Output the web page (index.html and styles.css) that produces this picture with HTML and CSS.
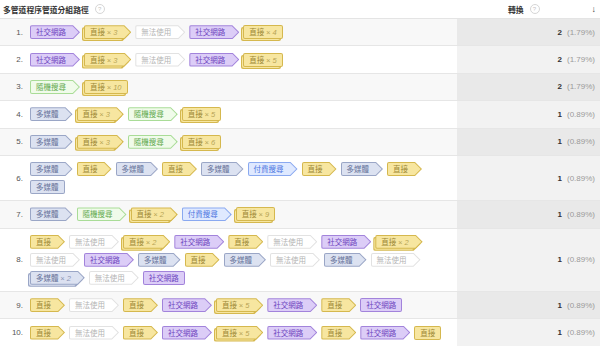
FILE: index.html
```html
<!DOCTYPE html>
<html lang="zh-Hant">
<head>
<meta charset="utf-8">
<title>多管道程序管道分組路徑</title>
<link rel="stylesheet" href="styles.css">
</head>
<body>
<div class="tbl">
  <div class="hdr">
    <div class="hdr-path">多管道程序管道分組路徑<span class="help">?</span></div>
    <div class="hdr-conv">轉換<span class="help">?</span><span class="sort">↓</span></div>
  </div>

  <div class="row odd">
    <div class="num">1.</div>
    <div class="path">
      <span class="t a social"><span class="f">社交網路</span></span>
      <span class="t a direct s"><span class="f">直接 <em>× 3</em></span></span>
      <span class="t a na"><span class="f">無法使用</span></span>
      <span class="t a social"><span class="f">社交網路</span></span>
      <span class="t direct s"><span class="f">直接 <em>× 4</em></span></span>
    </div>
    <div class="conv"><b>2</b><span class="pct">(1.79%)</span></div>
  </div>

  <div class="row">
    <div class="num">2.</div>
    <div class="path">
      <span class="t a social"><span class="f">社交網路</span></span>
      <span class="t a direct s"><span class="f">直接 <em>× 3</em></span></span>
      <span class="t a na"><span class="f">無法使用</span></span>
      <span class="t a social"><span class="f">社交網路</span></span>
      <span class="t direct s"><span class="f">直接 <em>× 5</em></span></span>
    </div>
    <div class="conv"><b>2</b><span class="pct">(1.79%)</span></div>
  </div>

  <div class="row odd">
    <div class="num">3.</div>
    <div class="path">
      <span class="t a organic"><span class="f">隨機搜尋</span></span>
      <span class="t direct s"><span class="f">直接 <em>× 10</em></span></span>
    </div>
    <div class="conv"><b>2</b><span class="pct">(1.79%)</span></div>
  </div>

  <div class="row">
    <div class="num">4.</div>
    <div class="path">
      <span class="t a display"><span class="f">多媒體</span></span>
      <span class="t a direct s"><span class="f">直接 <em>× 3</em></span></span>
      <span class="t a organic"><span class="f">隨機搜尋</span></span>
      <span class="t direct s"><span class="f">直接 <em>× 5</em></span></span>
    </div>
    <div class="conv"><b>1</b><span class="pct">(0.89%)</span></div>
  </div>

  <div class="row odd">
    <div class="num">5.</div>
    <div class="path">
      <span class="t a display"><span class="f">多媒體</span></span>
      <span class="t a direct s"><span class="f">直接 <em>× 3</em></span></span>
      <span class="t a organic"><span class="f">隨機搜尋</span></span>
      <span class="t direct s"><span class="f">直接 <em>× 6</em></span></span>
    </div>
    <div class="conv"><b>1</b><span class="pct">(0.89%)</span></div>
  </div>

  <div class="row">
    <div class="num">6.</div>
    <div class="path">
      <span class="t a display"><span class="f">多媒體</span></span>
      <span class="t a direct"><span class="f">直接</span></span>
      <span class="t a display"><span class="f">多媒體</span></span>
      <span class="t a direct"><span class="f">直接</span></span>
      <span class="t a display"><span class="f">多媒體</span></span>
      <span class="t a paid"><span class="f">付費搜尋</span></span>
      <span class="t a direct"><span class="f">直接</span></span>
      <span class="t a display"><span class="f">多媒體</span></span>
      <span class="t a direct"><span class="f">直接</span></span>
      <span class="t display"><span class="f">多媒體</span></span>
    </div>
    <div class="conv"><b>1</b><span class="pct">(0.89%)</span></div>
  </div>

  <div class="row odd">
    <div class="num">7.</div>
    <div class="path">
      <span class="t a display"><span class="f">多媒體</span></span>
      <span class="t a organic"><span class="f">隨機搜尋</span></span>
      <span class="t a direct s"><span class="f">直接 <em>× 2</em></span></span>
      <span class="t a paid"><span class="f">付費搜尋</span></span>
      <span class="t direct s"><span class="f">直接 <em>× 9</em></span></span>
    </div>
    <div class="conv"><b>1</b><span class="pct">(0.89%)</span></div>
  </div>

  <div class="row">
    <div class="num">8.</div>
    <div class="path">
      <span class="t a direct"><span class="f">直接</span></span>
      <span class="t a na"><span class="f">無法使用</span></span>
      <span class="t a direct s"><span class="f">直接 <em>× 2</em></span></span>
      <span class="t a social"><span class="f">社交網路</span></span>
      <span class="t a direct"><span class="f">直接</span></span>
      <span class="t a na"><span class="f">無法使用</span></span>
      <span class="t a social"><span class="f">社交網路</span></span>
      <span class="t a direct s"><span class="f">直接 <em>× 2</em></span></span>
      <span class="t a na"><span class="f">無法使用</span></span>
      <span class="t a social"><span class="f">社交網路</span></span>
      <span class="t a display"><span class="f">多媒體</span></span>
      <span class="t a direct"><span class="f">直接</span></span>
      <span class="t a display"><span class="f">多媒體</span></span>
      <span class="t a na"><span class="f">無法使用</span></span>
      <span class="t a display"><span class="f">多媒體</span></span>
      <span class="t a na"><span class="f">無法使用</span></span>
      <span class="t a display s"><span class="f">多媒體 <em>× 2</em></span></span>
      <span class="t a na"><span class="f">無法使用</span></span>
      <span class="t social"><span class="f">社交網路</span></span>
    </div>
    <div class="conv"><b>1</b><span class="pct">(0.89%)</span></div>
  </div>

  <div class="row odd">
    <div class="num">9.</div>
    <div class="path">
      <span class="t a direct"><span class="f">直接</span></span>
      <span class="t a na"><span class="f">無法使用</span></span>
      <span class="t a direct"><span class="f">直接</span></span>
      <span class="t a social"><span class="f">社交網路</span></span>
      <span class="t a direct s"><span class="f">直接 <em>× 5</em></span></span>
      <span class="t a social"><span class="f">社交網路</span></span>
      <span class="t a direct"><span class="f">直接</span></span>
      <span class="t social"><span class="f">社交網路</span></span>
    </div>
    <div class="conv"><b>1</b><span class="pct">(0.89%)</span></div>
  </div>

  <div class="row">
    <div class="num">10.</div>
    <div class="path">
      <span class="t a direct"><span class="f">直接</span></span>
      <span class="t a na"><span class="f">無法使用</span></span>
      <span class="t a direct"><span class="f">直接</span></span>
      <span class="t a social"><span class="f">社交網路</span></span>
      <span class="t a direct s"><span class="f">直接 <em>× 5</em></span></span>
      <span class="t a social"><span class="f">社交網路</span></span>
      <span class="t a direct"><span class="f">直接</span></span>
      <span class="t a social"><span class="f">社交網路</span></span>
      <span class="t direct"><span class="f">直接</span></span>
    </div>
    <div class="conv"><b>1</b><span class="pct">(0.89%)</span></div>
  </div>
</div>
</body>
</html>
```
FILE: styles.css
```css
html, body {
  margin: 0;
  padding: 0;
  background: #ffffff;
}
body {
  font-family: "Liberation Sans", "Noto Sans CJK TC", sans-serif;
  color: #333;
}
.tbl {
  width: 600px;
}
.hdr {
  display: grid;
  grid-template-columns: 457px 143px;
  height: 18px;
  border-bottom: 1px solid #e4e4e4;
  align-items: center;
}
.hdr-path {
  display: flex;
  align-items: center;
  padding-left: 3px;
  font-size: 7.8px;
  font-weight: bold;
  color: #333;
}
.hdr-conv {
  display: flex;
  align-items: center;
  justify-content: flex-end;
  padding-right: 4px;
  font-size: 7.8px;
  font-weight: bold;
  color: #333;
}
.help {
  display: inline-flex;
  align-items: center;
  justify-content: center;
  width: 8px;
  height: 8px;
  margin-left: 6px;
  border: 1px solid #d6d6d6;
  border-radius: 50%;
  font-size: 6px;
  font-weight: normal;
  color: #c4c4c4;
}
.sort {
  margin-left: 52px;
  font-size: 9px;
  font-weight: bold;
  color: #444;
}

.row {
  display: grid;
  grid-template-columns: 24px 433px 143px;
  border-bottom: 1px solid #e6e6e6;
}
.row .num,
.row .path {
  background: #ffffff;
}
.row .conv {
  background: #f2f2f2;
}
.row.odd .num,
.row.odd .path {
  background: #f8f8f8;
}
.row.odd .conv {
  background: #e9e9e9;
}
.num {
  display: flex;
  align-items: center;
  justify-content: flex-end;
  padding-right: 1px;
  font-size: 8px;
  color: #555;
}
.path {
  display: flex;
  flex-wrap: wrap;
  align-content: center;
  gap: 4px 4px;
  padding: 6.2px 10px 6.2px 6px;
}
.conv {
  display: flex;
  align-items: center;
  justify-content: flex-end;
  padding-right: 5px;
  font-size: 8px;
}
.conv b {
  color: #333;
}
.pct {
  margin-left: 5px;
  color: #9a9a9a;
}

/* path tags */
.t {
  position: relative;
  display: block;
  height: 14px;
  font-size: 7.5px;
  line-height: 14px;
  font-family: "Noto Sans CJK TC", "Liberation Sans", sans-serif;
}
.t .f {
  position: relative;
  z-index: 1;
  isolation: isolate;
  display: block;
  height: 14px;
  padding: 0 6px;
  background: var(--bd);
  border-radius: 2px;
  color: var(--tx);
  white-space: nowrap;
}
.t .f::before {
  content: "";
  position: absolute;
  inset: 1px;
  background: var(--bg);
  border-radius: 1px;
  z-index: -1;
}
.t em {
  font-family: "Liberation Sans", sans-serif;
  font-style: italic;
  opacity: 0.7;
}
.t.a .f {
  padding-right: 14px;
  clip-path: polygon(0 0, calc(100% - 7px) 0, 100% 50%, calc(100% - 7px) 100%, 0 100%);
}
.t.a .f::before {
  right: 1.4px;
  clip-path: polygon(0 0, calc(100% - 6px) 0, 100% 50%, calc(100% - 6px) 100%, 0 100%);
}

/* stacked look for repeated touch points */
.t.s::before,
.t.s::after {
  content: "";
  position: absolute;
  border-radius: 2px;
}
.t.s::before {
  left: -2px;
  top: 2px;
  width: 100%;
  height: 14px;
  background: var(--bd);
}
.t.s::after {
  left: -1px;
  top: 3px;
  width: calc(100% - 2px);
  height: 12px;
  background: var(--bg);
}
.t.a.s::before {
  clip-path: polygon(0 0, calc(100% - 7px) 0, 100% 50%, calc(100% - 7px) 100%, 0 100%);
}
.t.a.s::after {
  width: calc(100% - 3.4px);
  clip-path: polygon(0 0, calc(100% - 6px) 0, 100% 50%, calc(100% - 6px) 100%, 0 100%);
}

.social {
  --bg: #dccdf7;
  --bd: #a283db;
  --tx: #6d45c0;
}
.direct {
  --bg: #f7e6a0;
  --bd: #d5b84e;
  --tx: #9c8634;
}
.na {
  --bg: #ffffff;
  --bd: #e2e2e2;
  --tx: #b3b3b3;
}
.organic {
  --bg: #f0fbea;
  --bd: #a9dc97;
  --tx: #5ea84a;
}
.display {
  --bg: #dce2f1;
  --bd: #9aa6c6;
  --tx: #67739a;
}
.paid {
  --bg: #dfe9ff;
  --bd: #8aa9f0;
  --tx: #4a74e0;
}
```
